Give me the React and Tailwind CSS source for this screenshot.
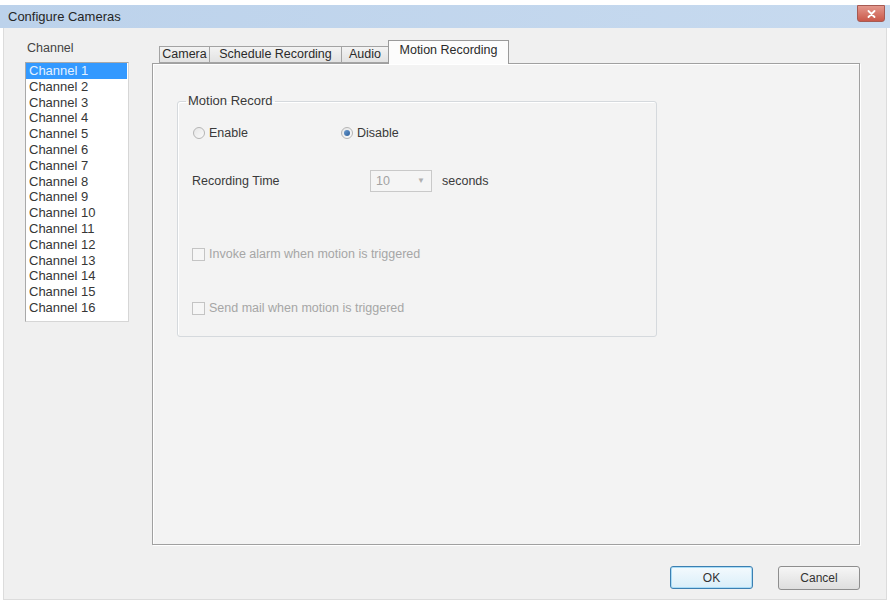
import { useState } from 'react';

const channels = Array.from({ length: 16 }, (_, i) => `Channel ${i + 1}`);

const tabs = [
  { label: 'Camera', width: 'w-[51px]' },
  { label: 'Schedule Recording', width: 'w-[133px]' },
  { label: 'Audio', width: 'w-[48px]' },
  { label: 'Motion Recording', width: 'w-[121px]' },
];

function Radio({ checked }) {
  return (
    <span className="w-[12px] h-[12px] rounded-full border border-[#b5b5b5] bg-gradient-to-br from-[#e6e6e6] to-[#fafafa] flex items-center justify-center shrink-0">
      {checked && <span className="w-[6px] h-[6px] rounded-full bg-gradient-to-br from-[#6a9bd0] to-[#2d5f9a]"></span>}
    </span>
  );
}

function Checkbox() {
  return <span className="w-[13px] h-[13px] border border-[#c4c4c4] bg-[#f6f6f6] shrink-0"></span>;
}

export default function App() {
  const [channel, setChannel] = useState(0);
  const [active, setActive] = useState(3);

  return (
    <div className="w-[890px] h-[604px] bg-white flex flex-col font-['Liberation_Sans',Arial,sans-serif] text-[#3a3a3a] overflow-hidden">
      {/* title bar */}
      <div className="mt-[5px] h-[23px] bg-gradient-to-r from-[#bcd2eb] to-[#c7daef] flex items-center pl-[8px] pr-[5px]">
        <span className="text-[13px] text-[#262626]">Configure Cameras</span>
        <button className="ml-auto self-start w-[28px] h-[17px] rounded-b-[3px] border border-[#a65a52] bg-gradient-to-b from-[#e3978c] to-[#c9584a] flex items-center justify-center">
          <svg width="9" height="8" viewBox="0 0 9 8">
            <path d="M1.5 1 L7.5 7 M7.5 1 L1.5 7" stroke="#fff" strokeWidth="1.8" strokeLinecap="round" />
          </svg>
        </button>
      </div>

      {/* window body */}
      <div className="flex-1 mx-[3px] mb-[4px] bg-[#f0f0f0] border-x border-b border-[#dcdcdc] flex pt-[12px] pl-[21px]">
        {/* channel list */}
        <div className="w-[104px] flex flex-col">
          <span className="ml-[2px] text-[12.5px] leading-[16px] text-[#444]">Channel</span>
          <ul className="mt-[6px] h-[260px] bg-white border border-[#a9a9a9] border-r-[#d6d6d6] border-b-[#d6d6d6] text-[13px] leading-[15.8px]">
            {channels.map((c, i) => (
              <li
                key={c}
                onClick={() => setChannel(i)}
                className={i === channel ? 'mr-px pl-[3px] bg-[#3399ff] text-[#e4f1ff]' : 'pl-[3px] text-[#363636]'}
              >
                {c}
              </li>
            ))}
          </ul>
        </div>

        {/* tab control */}
        <div className="ml-[23px] w-[708px] flex flex-col">
          <div className="h-[23px] flex items-end pl-[7px] relative z-10">
            {tabs.map((t, i) => (
              <button
                key={t.label}
                onClick={() => setActive(i)}
                className={
                  i === active
                    ? `${t.width} h-[24px] -mb-px -ml-px border border-b-0 border-[#9a9a9a] bg-[#fcfcfc] text-[12.5px] text-[#2a2a2a] pb-[4px]`
                    : `${t.width} h-[17px] -ml-px first:ml-0 border border-[#a3a3a3] bg-gradient-to-b from-[#f3f3f3] to-[#e2e2e2] text-[12.5px] leading-[15px] text-[#2a2a2a]`
                }
              >
                {t.label}
              </button>
            ))}
          </div>

          <div className="h-[482px] bg-[#f3f3f3] border border-[#a0a0a0] shadow-[inset_1px_1px_0_#fff,1px_1px_0_#fff] pl-[24px] pt-[29px]">
            <fieldset className="w-[480px] h-[244px] border border-[#d5d9dd] rounded-[3px] shadow-[inset_1px_1px_0_#fff] px-[8px]">
              <legend className="px-[2px] text-[13px] leading-[16px] text-[#3a3a3a]">Motion Record</legend>

              <div className="mt-[16px] ml-[7px] flex items-center h-[16px] text-[12.5px]">
                <label className="w-[148px] flex items-center gap-[4px]">
                  <Radio />
                  Enable
                </label>
                <label className="flex items-center gap-[4px]">
                  <Radio checked />
                  Disable
                </label>
              </div>

              <div className="mt-[29px] ml-[6px] flex items-center h-[22px] text-[12.5px]">
                <span className="w-[178px]">Recording Time</span>
                <div className="w-[62px] h-[22px] border border-[#c9c9c9] bg-[#f5f5f5] flex items-center pl-[5px] pr-[6px] text-[#a3a3a3]">
                  <span>10</span>
                  <span className="ml-auto text-[8px] text-[#b0b0b0]">▼</span>
                </div>
                <span className="ml-[10px]">seconds</span>
              </div>

              <label className="mt-[54px] ml-[6px] flex items-center gap-[4px] h-[16px] text-[12.5px] text-[#a6a6a6]">
                <Checkbox />
                Invoke alarm when motion is triggered
              </label>

              <label className="mt-[38px] ml-[6px] flex items-center gap-[4px] h-[16px] text-[12.5px] text-[#a6a6a6]">
                <Checkbox />
                Send mail when motion is triggered
              </label>
            </fieldset>
          </div>

          <div className="mt-[21px] flex justify-end gap-[25px]">
            <button className="w-[83px] h-[23px] rounded-[3px] border border-[#3c7fb1] bg-gradient-to-b from-[#f4fafd] to-[#d9eef9] shadow-[inset_0_0_0_1px_#a9dcf6] text-[12px] text-[#333]">
              OK
            </button>
            <button className="w-[82px] h-[24px] rounded-[3px] border border-[#8e8e8e] bg-gradient-to-b from-[#f6f6f6] to-[#dedede] text-[12px] text-[#333]">
              Cancel
            </button>
          </div>
        </div>
      </div>
    </div>
  );
}
